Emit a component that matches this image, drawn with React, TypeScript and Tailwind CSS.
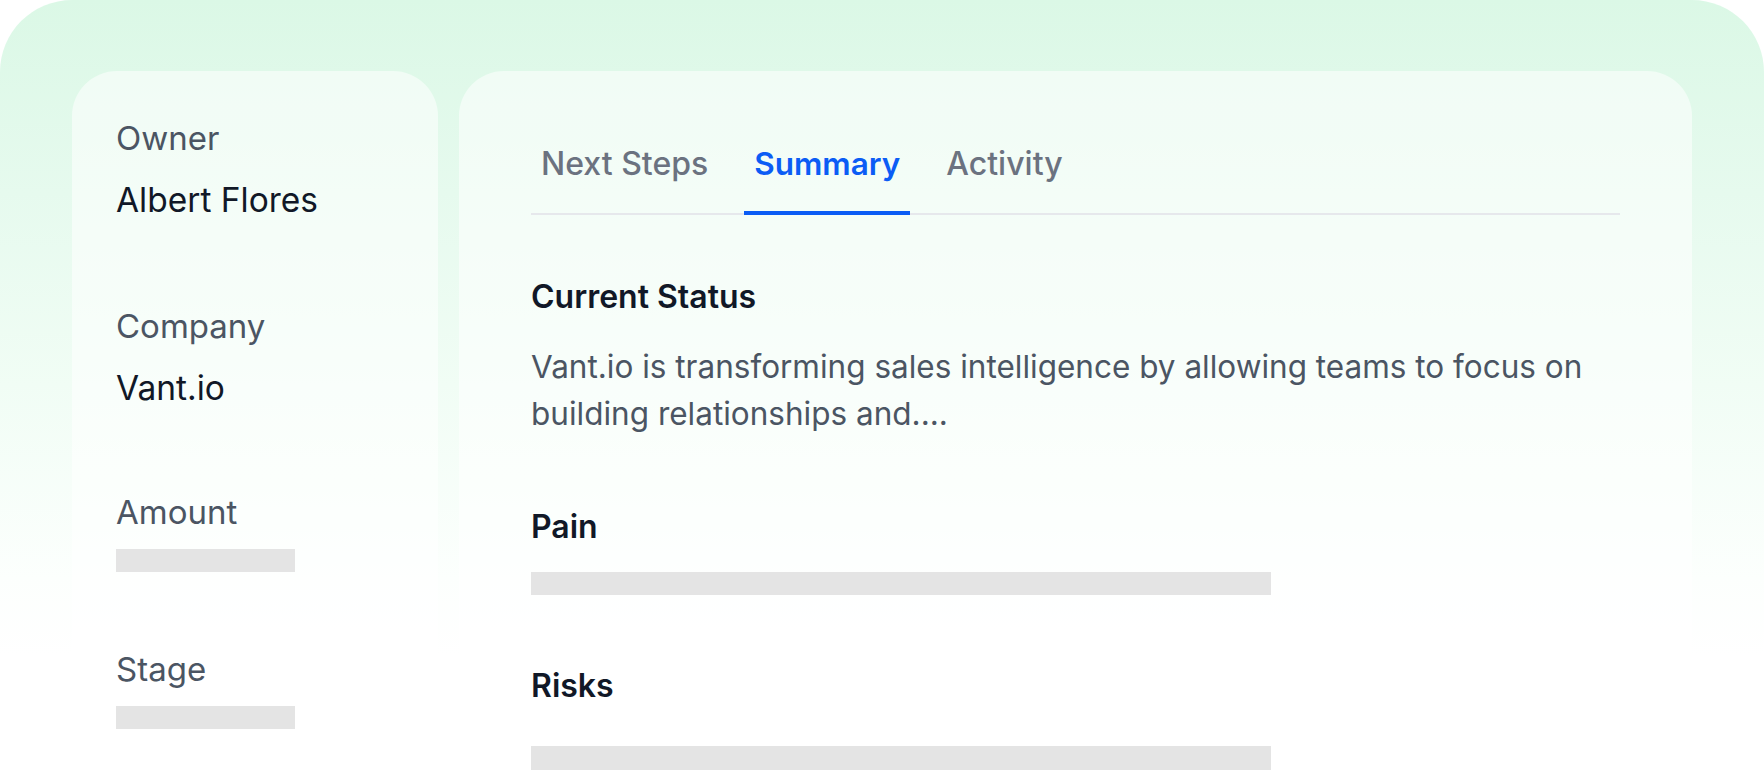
import React from "react";

const font = { fontFamily: "Inter, 'Noto Sans', sans-serif" };

function Field({ label, value, bar }: { label: string; value?: string; bar?: boolean }) {
  return (
    <div>
      <div className="text-[33px] leading-[40px] text-[#4b5563]">{label}</div>
      {value && <div className="mt-[22px] text-[33.5px] leading-[40px] text-[#111827]">{value}</div>}
      {bar && <div className="mt-[17px] h-[23px] w-[179px] bg-[#e4e4e4]" />}
    </div>
  );
}

export default function App() {
  return (
    <div style={font} className="h-[771px] w-full overflow-hidden bg-white">
      <div className="flex h-[771px] gap-[21px] overflow-hidden rounded-t-[72px] bg-[linear-gradient(to_bottom,#dbf8e6_0%,#e6faee_25%,#f1fdf5_50%,#fcfffd_75%,#ffffff_85%)] px-[72px] pt-[71px]">
        <div className="flex h-[760px] w-[366px] shrink-0 flex-col rounded-t-[45px] bg-white/55 pl-[44px] pt-[47px]">
          <Field label="Owner" value="Albert Flores" />
          <div className="mt-[86px]">
            <Field label="Company" value="Vant.io" />
          </div>
          <div className="mt-[84px]">
            <Field label="Amount" bar />
          </div>
          <div className="mt-[77px]">
            <Field label="Stage" bar />
          </div>
        </div>
        <div className="flex h-[760px] flex-1 flex-col rounded-t-[45px] bg-white/55 px-[72px] pt-[73px]">
          <div className="flex gap-[26px] border-b-2 border-[#e6e8ec]">
            <div className="-mb-[2px] border-b-4 border-transparent px-[10px] pb-[27px] text-[32px] font-medium leading-[40px] text-[#6b7280]">Next Steps</div>
            <div className="-mb-[2px] border-b-4 border-[#0b5cf5] px-[10px] pb-[27px] text-[31.5px] font-semibold leading-[40px] text-[#0b5cf5]">Summary</div>
            <div className="-mb-[2px] border-b-4 border-transparent px-[10px] pb-[27px] text-[32px] font-medium leading-[40px] text-[#6b7280]">Activity</div>
          </div>
          <div className="mt-[62px] text-[32px] font-semibold leading-[40px] text-[#111827]">Current Status</div>
          <p className="mt-[26px] text-[31.5px] leading-[47px] text-[#4b5563]">
            Vant.io is transforming sales intelligence by allowing teams to focus on building relationships and....
          </p>
          <div className="mt-[70px] text-[32px] font-semibold leading-[40px] text-[#111827]">Pain</div>
          <div className="mt-[25px] h-[23px] w-[740px] bg-[#e4e4e4]" />
          <div className="mt-[71px] text-[32px] font-semibold leading-[40px] text-[#111827]">Risks</div>
          <div className="mt-[40px] h-[24px] w-[740px] bg-[#e4e4e4]" />
        </div>
      </div>
    </div>
  );
}
